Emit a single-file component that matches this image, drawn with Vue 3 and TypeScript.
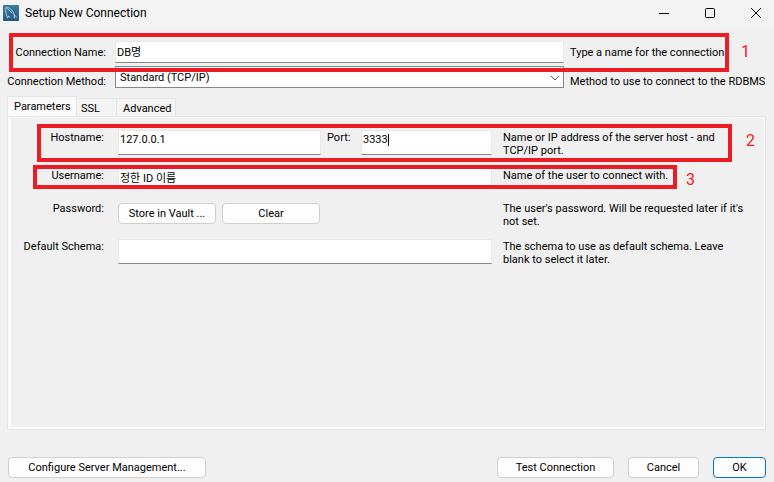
<script setup lang="ts">
import { ref } from 'vue'

const connectionName = ref('DB명')
const method = ref('Standard (TCP/IP)')
const hostname = ref('127.0.0.1')
const port = ref('3333')
const username = ref('정한 ID 이름')
const schema = ref('')
const tabs = ['Parameters', 'SSL', 'Advanced']
const activeTab = ref('Parameters')
</script>

<template>
  <main class="dialog">
    <header class="titlebar">
      <svg class="logo" viewBox="0 0 16 16" aria-hidden="true">
        <defs>
          <linearGradient id="tile" x1="0" y1="0" x2="0" y2="1">
            <stop offset="0" stop-color="#3a7ca3" />
            <stop offset="1" stop-color="#1f5a80" />
          </linearGradient>
        </defs>
        <rect width="16" height="16" rx="1" fill="url(#tile)" />
        <path d="M4.5 13.2 C3 9 2.2 5 2.8 2.6 C6.5 2.2 9.8 5 11 9.2 C11.5 10.5 13 11.5 14.3 12.8 M4.5 13.2 L5.6 10.8 L7 12.8 M3.5 3 L9.5 8.2 M11 9.4 L11.2 13 L12.4 12" fill="none" stroke="#b9d3e0" stroke-width="0.9" />
      </svg>
      <h1>Setup New Connection</h1>
      <div class="window-controls">
        <button type="button" aria-label="Minimize">
          <svg viewBox="0 0 12 12"><path d="M1 6.5h10" /></svg>
        </button>
        <button type="button" aria-label="Maximize">
          <svg viewBox="0 0 12 12"><rect x="1.5" y="1.5" width="9" height="9" rx="1" /></svg>
        </button>
        <button type="button" aria-label="Close">
          <svg viewBox="0 0 12 12"><path d="M1 1l10 10M11 1L1 11" /></svg>
        </button>
      </div>
    </header>

    <form class="content" @submit.prevent>
      <div class="top-row name-row">
        <label for="name">Connection Name:</label>
        <input id="name" v-model="connectionName" type="text" />
        <p>Type a name for the connection</p>
        <span class="mark mark-name"><b>1</b></span>
      </div>
      <div class="top-row method-row">
        <label for="method">Connection Method:</label>
        <div class="select-wrap">
          <select id="method" v-model="method">
            <option>Standard (TCP/IP)</option>
          </select>
          <svg class="chevron" viewBox="0 0 10 6" aria-hidden="true"><path d="M1 1l4 4 4-4" /></svg>
        </div>
        <p>Method to use to connect to the RDBMS</p>
      </div>

      <div class="tabs" role="tablist">
        <button
          v-for="tab in tabs"
          :key="tab"
          type="button"
          role="tab"
          :aria-selected="tab === activeTab"
          :class="{ active: tab === activeTab }"
          @click="activeTab = tab"
        >{{ tab }}</button>
      </div>

      <section class="panel" role="tabpanel">
        <div class="field host-row">
          <label for="host">Hostname:</label>
          <div class="controls host-controls">
            <input id="host" v-model="hostname" type="text" />
            <label for="port">Port:</label>
            <div class="port">
              <input id="port" v-model="port" type="text" />
              <i class="caret"></i>
            </div>
          </div>
          <p>Name or IP address of the server host - and <span class="keep">TCP/IP port.</span></p>
          <span class="mark mark-host"><b>2</b></span>
        </div>
        <div class="field user-row">
          <label for="user">Username:</label>
          <div class="controls"><input id="user" v-model="username" type="text" /></div>
          <p>Name of the user to connect with.</p>
          <span class="mark mark-user"><b>3</b></span>
        </div>
        <div class="field password-row">
          <span class="caption">Password:</span>
          <div class="controls password-controls">
            <button type="button" class="push">Store in Vault ...</button>
            <button type="button" class="push">Clear</button>
          </div>
          <p>The user's password. Will be requested later if it's not set.</p>
        </div>
        <div class="field">
          <label for="schema">Default Schema:</label>
          <div class="controls"><input id="schema" v-model="schema" type="text" /></div>
          <p>The schema to use as default schema. Leave blank to select it later.</p>
        </div>
      </section>

      <footer class="actions">
        <button type="button" class="push configure">Configure Server Management...</button>
        <button type="button" class="push test">Test Connection</button>
        <button type="button" class="push cancel">Cancel</button>
        <button type="submit" class="push ok">OK</button>
      </footer>
    </form>
  </main>
</template>

<style>
body {
  margin: 0;
  background: #f0f0f0;
}
</style>

<style scoped>
* {
  box-sizing: border-box;
}
.dialog {
  display: flex;
  flex-direction: column;
  min-height: 100vh;
  overflow: hidden;
  background: #f0f0f0;
  color: #000;
  font: 11px/13px Roboto, "Noto Sans CJK KR", sans-serif;
}
button,
input,
select {
  font: inherit;
  color: inherit;
}
p {
  margin: 0;
}
.keep {
  white-space: nowrap;
}
.titlebar {
  display: flex;
  align-items: center;
  height: 28px;
  padding: 0 0 2px 3px;
  background: #f3f3f3;
}
.logo {
  width: 16px;
  height: 16px;
}
h1 {
  flex: 1;
  margin: 0 0 0 6px;
  font: 12px/16px Roboto, sans-serif;
}
.window-controls {
  display: flex;
  gap: 10px;
}
.window-controls button {
  display: grid;
  place-items: center;
  width: 36px;
  height: 26px;
  padding: 0;
  border: 0;
  background: none;
}
.window-controls svg {
  width: 12px;
  height: 12px;
  fill: none;
  stroke: #000;
  stroke-width: 1;
}
.content {
  display: flex;
  flex: 1;
  flex-direction: column;
  padding: 13px 8px 4px 7px;
}
.top-row {
  position: relative;
  display: grid;
  grid-template-columns: 99px minmax(0, 1fr) 196px;
  align-items: center;
  column-gap: 6px;
}
.top-row label {
  text-align: right;
  white-space: nowrap;
}
.top-row > :nth-child(2) {
  margin-left: 3px;
}
.top-row p {
  white-space: nowrap;
}
.name-row {
  height: 22px;
  margin-bottom: 3px;
}
.method-row {
  height: 22px;
  margin-bottom: 8px;
}
.method-row label,
.method-row p {
  padding-top: 8px;
}
input {
  min-width: 0;
  width: 100%;
  height: 25px;
  padding: 0 1px 6px;
  border: 1px solid #e8e8e8;
  border-bottom-color: #868686;
  border-radius: 0;
  background: #fff;
  outline: 0;
}
.name-row input {
  width: auto;
  height: 22px;
  padding: 0 1px 2px;
}
.select-wrap {
  position: relative;
}
select {
  display: block;
  width: 100%;
  height: 22px;
  padding: 0 20px 0 4px;
  border: 1px solid #868686;
  border-radius: 0;
  background: #fff;
  appearance: none;
  outline: 0;
}
.chevron {
  position: absolute;
  top: 9px;
  right: 4px;
  width: 10px;
  height: 6px;
  fill: none;
  stroke: #555;
}
.tabs {
  display: flex;
  align-items: flex-end;
  height: 20px;
}
.tabs button {
  height: 18px;
  padding: 1px 4px 0;
  border: 1px solid #e5e5e5;
  border-bottom: 0;
  border-left: 0;
  background: #f3f3f3;
  text-align: left;
}
.tabs button:nth-child(1) {
  width: 70px;
}
.tabs button:nth-child(2) {
  width: 40px;
}
.tabs button:nth-child(3) {
  width: 59px;
  padding-left: 6px;
}
.tabs button.active {
  height: 20px;
  padding: 0 6px 1px;
  border-left: 1px solid #e5e5e5;
  background: #fafafa;
}
.panel {
  flex: 1;
  padding: 13px 8px 10px;
  border: 1px solid #e5e5e5;
  box-shadow: inset 0 0 0 1px #fafafa, inset 3px -2px 0 #fafafa;
}
.field {
  position: relative;
  display: grid;
  grid-template-columns: 88px minmax(0, 1fr) 254px;
  align-items: start;
}
.field > label,
.field > .caption {
  padding-top: 1px;
  text-align: right;
  white-space: nowrap;
}
.field > p {
  padding: 1px 8px 0 0;
}
.controls {
  display: flex;
  padding: 0 11px 0 14px;
}
.host-controls input {
  flex: 1;
}
.host-controls label {
  width: 40px;
  padding: 1px 0 0 6px;
}
.port {
  position: relative;
  width: 131px;
}
.caret {
  position: absolute;
  top: 4px;
  left: 27px;
  width: 1px;
  height: 12px;
  background: #000;
}
.host-row {
  height: 38px;
}
.user-row {
  height: 33px;
}
.user-row input {
  height: 20px;
  padding-bottom: 2px;
}
.password-row {
  height: 38px;
}
.password-controls {
  gap: 6px;
  padding-top: 2px;
}
.password-controls .push {
  width: 98px;
}
.push {
  height: 21px;
  padding: 0;
  border: 1px solid #d0d0d0;
  border-radius: 4px;
  background: #fdfdfd;
  white-space: nowrap;
}
.actions {
  display: flex;
  gap: 14px;
  padding: 27px 0 0 1px;
}
.configure {
  width: 198px;
  margin-right: auto;
}
.test {
  width: 117px;
}
.cancel {
  width: 71px;
}
.ok {
  width: 53px;
  border-color: #0078d4;
}
.mark {
  position: absolute;
  z-index: 1;
  border: 4px solid #ed1c24;
  pointer-events: none;
}
.mark b {
  position: absolute;
  left: calc(100% + 16px);
  color: #ed1c24;
  font: 16px/20px Roboto, sans-serif;
}
.mark-name {
  top: -8px;
  right: 37px;
  bottom: -9px;
  left: 2px;
}
.mark-host {
  top: -6px;
  right: 25px;
  bottom: 6px;
  left: 21px;
}
.mark-user {
  top: -3px;
  right: 80px;
  bottom: 12px;
  left: 17px;
}
.mark-name b {
  top: 5px;
}
.mark-host b {
  top: 3px;
  left: calc(100% + 18px);
}
.mark-user b {
  top: 1px;
  left: calc(100% + 13px);
}
</style>
